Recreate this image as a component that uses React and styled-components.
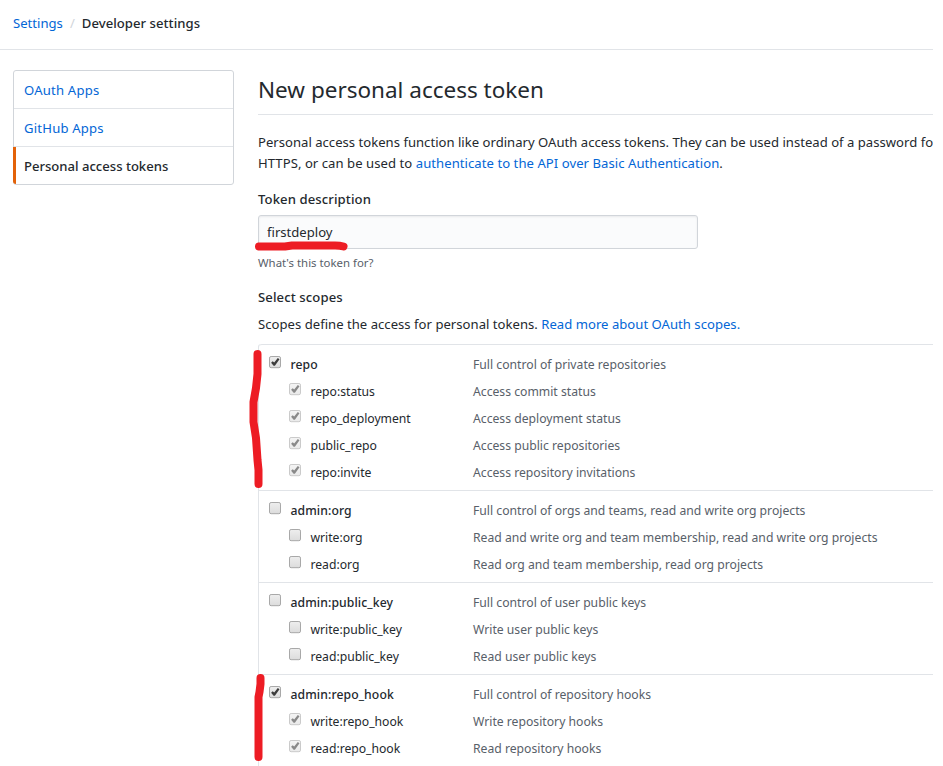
import React from 'react';
import styled, { createGlobalStyle } from 'styled-components';

const GlobalStyle = createGlobalStyle`
  * { box-sizing: border-box; }
  html, body { margin: 0; padding: 0; background: #fff; overflow: hidden; }
  body {
    font-family: "Noto Sans", "Open Sans", sans-serif;
    font-size: 13.1px;
    line-height: 21px;
    color: #24292e;
  }
  a { color: #0366d6; text-decoration: none; }
`;

const Page = styled.div`
  position: relative;
  width: 943px;
  height: 766px;
  overflow: hidden;
`;

const Breadcrumb = styled.nav`
  display: flex;
  height: 50px;
  padding: 13px 0 0 13px;
  border-bottom: 1px solid #e1e4e8;
  white-space: pre;
  margin-right: 10px;
`;

const Slash = styled.span`
  width: 19px;
  text-align: center;
  color: #d1d5da;
`;

const Strong = styled.strong`
  font-weight: 500;
  letter-spacing: 0.04px;
`;

const Columns = styled.div`
  display: grid;
  grid-template-columns: 221px 675px;
  column-gap: 24px;
  padding: 20px 0 0 13px;
`;

const Menu = styled.nav`
  align-self: start;
  height: 115px;
  border: 1px solid #d1d5da;
  border-radius: 3px;
`;

const MenuItem = styled.a`
  display: block;
  height: ${p => (p.$current ? 37 : 38)}px;
  padding: 9px 0 0 10px;
  letter-spacing: 0.2px;
  white-space: nowrap;
  border-bottom: ${p => (p.$current ? 'none' : '1px solid #e1e4e8')};
  ${p => p.$current && `
    margin-left: -1px;
    padding-left: 8px;
    border-left: 3px solid #e36209;
    border-radius: 0 0 0 3px;
    color: #24292e;
    font-weight: 500;
    letter-spacing: -0.01px;
  `}
`;

const Content = styled.main`
  min-width: 0;
  white-space: nowrap;
`;

const Heading = styled.h1`
  height: 45px;
  margin: 0 0 17px;
  padding-top: 2px;
  border-bottom: 1px solid #e1e4e8;
  font-size: 22.5px;
  line-height: 36px;
  font-weight: 400;
`;

const Intro = styled.p`
  margin: 0 0 15px;
  overflow: hidden;
`;

const Line = styled.span`
  display: block;
  letter-spacing: ${p => (p.$last ? 0.05 : 0.01)}px;
`;

const FieldTitle = styled.h2`
  margin: 0 0 ${p => p.$gap}px;
  font-size: 13.1px;
  line-height: 21px;
  font-weight: 500;
  letter-spacing: 0.1px;
`;

const TextInput = styled.input`
  display: block;
  width: 440px;
  height: 34px;
  padding: 0 8px;
  border: 1px solid #d1d5da;
  border-radius: 3px;
  background: #fafbfc;
  box-shadow: inset 0 1px 2px rgba(27, 31, 35, 0.075);
  font: inherit;
  color: #24292e;
  outline: none;
`;

const Note = styled.p`
  margin: 4px 0 14px;
  height: 20px;
  font-size: 11.4px;
  line-height: 20px;
  color: #586069;
`;

const ScopesIntro = styled.p`
  margin: 0 0 9px;
  letter-spacing: 0.02px;
`;

const ScopeList = styled.div`
  border-left: 1px solid #e1e4e8;
  border-radius: 3px 0 0 0;
  height: 440px;
`;

const ScopeGroup = styled.section`
  border-top: 1px solid #e1e4e8;
  border-radius: ${p => (p.$first ? '3px 0 0 0' : '0')};
  padding: 5px 0 5px 10px;
`;

const ScopeRow = styled.label`
  display: grid;
  grid-template-columns: ${p => (p.$child ? '21px 163px' : '21px 183px')} 1fr;
  height: 27px;
  padding-left: ${p => (p.$child ? 20 : 0)}px;
  font-size: 12.2px;
  line-height: 29px;
`;

const ScopeName = styled.span`
  padding-left: 0.5px;
  font-weight: ${p => (p.$child ? 400 : 500)};
  letter-spacing: ${p => (p.$child ? -0.02 : 0.1)}px;
`;

const ScopeText = styled.span`
  color: #586069;
`;

const CheckIcon = styled.svg`
  display: block;
  width: 14px;
  height: 14px;
  margin-top: 6px;
  opacity: ${p => (p.$disabled ? 0.6 : 1)};
`;

const Marks = styled.svg`
  position: absolute;
  left: 0;
  top: 0;
  pointer-events: none;
`;

function Check({ checked, disabled }) {
  return (
    <CheckIcon viewBox="0 0 14 14" $disabled={disabled}>
      <defs>
        <linearGradient id="face" x1="0" y1="0" x2="0" y2="1">
          <stop offset="0" stopColor="#eeeeee" />
          <stop offset="1" stopColor="#dcdcdc" />
        </linearGradient>
      </defs>
      <rect x="0.5" y="0.5" width="11" height="11.2" rx="1.6" fill="url(#face)" stroke="#a8a8a8" />
      {checked && (
        <path d="M2.1 6.8 3.7 5.2 5.2 6.5 8.8 2.1 10.5 3.3 5.9 9.8 4.6 9.8Z" fill="#3c3c3c" />
      )}
    </CheckIcon>
  );
}

const groups = [
  { name: 'repo', text: 'Full control of private repositories', checked: true, children: [
    ['repo:status', 'Access commit status'],
    ['repo_deployment', 'Access deployment status'],
    ['public_repo', 'Access public repositories'],
    ['repo:invite', 'Access repository invitations'],
  ] },
  { name: 'admin:org', text: 'Full control of orgs and teams, read and write org projects', children: [
    ['write:org', 'Read and write org and team membership, read and write org projects'],
    ['read:org', 'Read org and team membership, read org projects'],
  ] },
  { name: 'admin:public_key', text: 'Full control of user public keys', children: [
    ['write:public_key', 'Write user public keys'],
    ['read:public_key', 'Read user public keys'],
  ] },
  { name: 'admin:repo_hook', text: 'Full control of repository hooks', checked: true, children: [
    ['write:repo_hook', 'Write repository hooks'],
    ['read:repo_hook', 'Read repository hooks'],
  ] },
];

export default function App() {
  return (
    <Page>
      <GlobalStyle />
      <Breadcrumb>
        <a>Settings</a>
        <Slash>/</Slash>
        <Strong>Developer settings</Strong>
      </Breadcrumb>
      <Columns>
        <Menu>
          <MenuItem>OAuth Apps</MenuItem>
          <MenuItem>GitHub Apps</MenuItem>
          <MenuItem $current>Personal access tokens</MenuItem>
        </Menu>
        <Content>
          <Heading>New personal access token</Heading>
          <Intro>
            <Line>Personal access tokens function like ordinary OAuth access tokens. They can be used instead of a password fo</Line>
            <Line $last>HTTPS, or can be used to <a>authenticate to the API over Basic Authentication</a>.</Line>
          </Intro>
          <FieldTitle $gap={5}>Token description</FieldTitle>
          <TextInput defaultValue="firstdeploy" />
          <Note>What's this token for?</Note>
          <FieldTitle $gap={6}>Select scopes</FieldTitle>
          <ScopesIntro>Scopes define the access for personal tokens. <a>Read more about OAuth scopes.</a></ScopesIntro>
          <ScopeList>
            {groups.map((g, i) => (
              <ScopeGroup key={g.name} $first={i === 0}>
                <ScopeRow>
                  <Check checked={g.checked} />
                  <ScopeName>{g.name}</ScopeName>
                  <ScopeText>{g.text}</ScopeText>
                </ScopeRow>
                {g.children.map(([name, text]) => (
                  <ScopeRow key={name} $child>
                    <Check checked={g.checked} disabled={g.checked} />
                    <ScopeName $child>{name}</ScopeName>
                    <ScopeText>{text}</ScopeText>
                  </ScopeRow>
                ))}
              </ScopeGroup>
            ))}
          </ScopeList>
        </Content>
      </Columns>
      <Marks width="943" height="766" fill="none" stroke="#ed1c24" strokeWidth="8" strokeLinecap="round" strokeLinejoin="round">
        <path d="M259 246.5 H285 L292 245.5 H335 Q340 245.5 343.5 246.5" />
        <path d="M257.5 354 V374 L256 388 L253.5 402 V422 L256 438 L257.5 460 L258.5 470 V484" />
        <path d="M260.5 678 V684 L259.5 692 L258.5 697 V757" />
      </Marks>
    </Page>
  );
}
